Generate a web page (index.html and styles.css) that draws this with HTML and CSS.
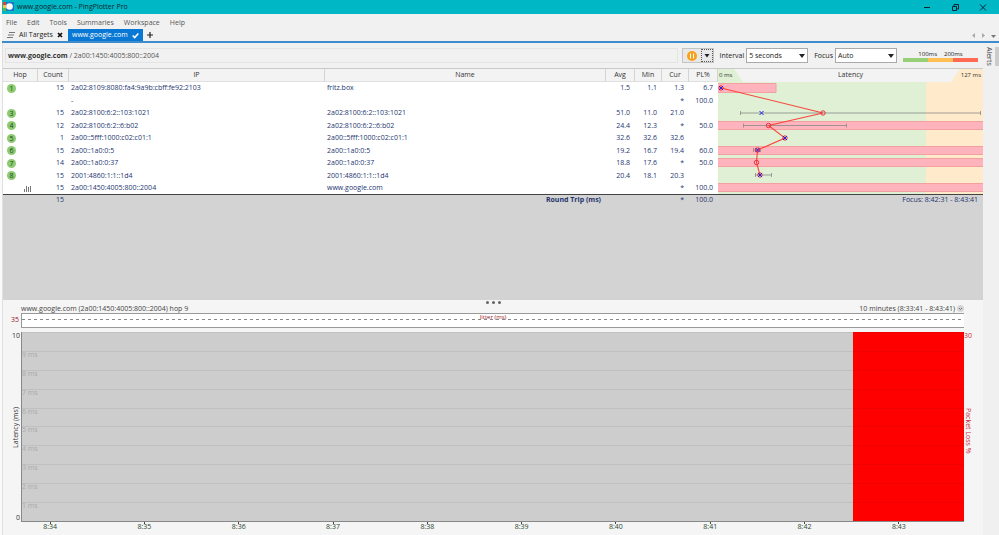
FILE: index.html
```html
<!DOCTYPE html>
<html lang="en">
<head>
<meta charset="utf-8">
<title>www.google.com - PingPlotter Pro</title>
<link rel="stylesheet" href="styles.css">
</head>
<body>
<header class="titlebar">
  <svg class="logo" width="11" height="12" viewBox="0 0 11 12" aria-hidden="true"><path fill="#e84030" d="M0 1h3v3H0z"/><path fill="#f5c63c" d="M0 4h3v3H0z"/><path fill="#58b947" d="M0 7h3v3H0z"/><rect x="3" y="1" width="8" height="9" fill="#1878c8"/><circle cx="6.500" cy="5.500" r="3.300" fill="#fff"/></svg>
  <h1>www.google.com - PingPlotter Pro</h1>
  <div class="window-buttons">
    <button aria-label="Minimize"><svg width="10" height="10" viewBox="0 0 10 10"><path d="M2 5.500h6" stroke="#123" fill="none"/></svg></button>
    <button aria-label="Restore"><svg width="10" height="10" viewBox="0 0 10 10"><path d="M2.500 4.500h4v4h-4zM4 4V2.500h4.500V7H7" stroke="#123" fill="none"/></svg></button>
    <button aria-label="Close"><svg width="10" height="10" viewBox="0 0 10 10"><path d="M2 2.500l6 6M8 2.500l-6 6" stroke="#123" fill="none"/></svg></button>
  </div>
</header>
<nav class="menu">
  <button>File</button><button>Edit</button><button>Tools</button><button>Summaries</button><button>Workspace</button><button>Help</button>
</nav>
<div class="tabs">
  <button class="tab"><svg width="8" height="8" viewBox="0 0 8 8"><path d="M2 1.500h6M1 4h6M0 6.500h6" stroke="#777" fill="none"/></svg>All Targets<svg width="6" height="6" viewBox="0 0 6 6"><path d="M1 1l4 4M5 1l-4 4" stroke="#111" stroke-width="1.700"/></svg></button>
  <button class="tab active">www.google.com<svg width="7" height="7" viewBox="0 0 7 7"><path d="M.7 3.500l2 2L6.300 1.500" stroke="#fff" stroke-width="1.600" fill="none"/></svg></button>
  <button class="tab add" aria-label="Add tab"><svg width="8" height="8" viewBox="0 0 8 8"><path d="M1 4h6M4 1v6" stroke="#222" stroke-width="1.200"/></svg></button>
  <svg class="tab-arrows" width="30" height="8" viewBox="0 0 30 8"><path fill="#aaa" d="M6 1v5L3 3.500zM13 1v5l3-2.500z"/><path fill="#777" d="M22 3h5l-2.500 3z"/></svg>
</div>
<div class="workspace">
  <main>
    <div class="toolbar">
      <div class="target"><b>www.google.com</b> / 2a00:1450:4005:800::2004</div>
      <div class="pause-group">
        <button class="pause" aria-label="Pause"><svg width="12" height="12" viewBox="0 0 12 12"><circle cx="6" cy="6" r="5" fill="#f9a11b"/><path d="M4.500 3.500v5M7.500 3.500v5" stroke="#fff"/></svg></button>
        <button class="more" aria-label="Pause options"><svg width="6" height="4" viewBox="0 0 6 4"><path d="M.5 0h5L3 3.500z" fill="#222"/></svg></button>
      </div>
      <label for="interval">Interval</label>
      <span class="pick"><select id="interval"><option>5 seconds</option></select></span>
      <label for="focus">Focus</label>
      <span class="pick"><select id="focus"><option>Auto</option></select></span>
      <div class="legend">
        <div class="legend-labels"><span>100ms</span><span>200ms</span></div>
        <div class="legend-bar"></div>
      </div>
    </div>
    <section class="trace">
      <table>
        <colgroup><col class="c-hop"><col class="c-count"><col class="c-ip"><col><col class="c-avg"><col class="c-num"><col class="c-num"><col class="c-loss"></colgroup>
        <thead><tr><th>Hop</th><th>Count</th><th>IP</th><th>Name</th><th>Avg</th><th>Min</th><th>Cur</th><th>PL%</th></tr></thead>
        <tbody>
          <tr><td><span class="hop">1</span></td><td>15</td><td>2a02:8109:8080:fa4:9a9b:cbff:fe92:2103</td><td>fritz.box</td><td>1.5</td><td>1.1</td><td>1.3</td><td>6.7</td></tr>
          <tr><td></td><td></td><td>-</td><td></td><td></td><td></td><td>*</td><td>100.0</td></tr>
          <tr><td><span class="hop">3</span></td><td>15</td><td>2a02:8100:6:2::103:1021</td><td>2a02:8100:6:2::103:1021</td><td>51.0</td><td>11.0</td><td>21.0</td><td></td></tr>
          <tr><td><span class="hop">4</span></td><td>12</td><td>2a02:8100:6:2::6:b02</td><td>2a02:8100:6:2::6:b02</td><td>24.4</td><td>12.3</td><td>*</td><td>50.0</td></tr>
          <tr><td><span class="hop">5</span></td><td>1</td><td>2a00::5fff:1000:c02:c01:1</td><td>2a00::5fff:1000:c02:c01:1</td><td>32.6</td><td>32.6</td><td>32.6</td><td></td></tr>
          <tr><td><span class="hop">6</span></td><td>15</td><td>2a00::1a0:0:5</td><td>2a00::1a0:0:5</td><td>19.2</td><td>16.7</td><td>19.4</td><td>60.0</td></tr>
          <tr><td><span class="hop">7</span></td><td>14</td><td>2a00::1a0:0:37</td><td>2a00::1a0:0:37</td><td>18.8</td><td>17.6</td><td>*</td><td>50.0</td></tr>
          <tr><td><span class="hop">8</span></td><td>15</td><td>2001:4860:1:1::1d4</td><td>2001:4860:1:1::1d4</td><td>20.4</td><td>18.1</td><td>20.3</td><td></td></tr>
          <tr><td class="graphed"><svg width="8" height="7" viewBox="0 0 8 7"><path d="M.5 7V4M2.500 7V1M4.500 7V2M6.500 7V1" stroke="#777"/></svg></td><td>15</td><td>2a00:1450:4005:800::2004</td><td>www.google.com</td><td></td><td></td><td>*</td><td>100.0</td></tr>
        </tbody>
        <tfoot><tr><td></td><td>15</td><td></td><td class="round-trip">Round Trip (ms)</td><td></td><td></td><td>*</td><td>100.0</td></tr></tfoot>
      </table>
      <div class="latency">
        <div class="scale"><span class="scale-min">0 ms</span><span>Latency</span><span class="scale-max">127 ms</span></div>
        <svg class="plot" viewBox="0 0 265 112" preserveAspectRatio="none" role="img" aria-label="Latency by hop">
          <path fill="#dff0d4" d="M0 0h208v112H0z"/><path fill="#ffeacb" d="M208 0h57v112h-57z"/>
          <g fill="#ffb3bc" stroke="#f3a0a0">
            <path d="M-1 1.500h59v9H-1zM-1 39.500h267v8H-1zM-1 64.500h267v8H-1zM-1 76.500h267v8H-1zM-1 101.500h267v8H-1z"/>
          </g>
          <path stroke="#888" stroke-opacity=".8" fill="none" d="M22.500 31H262.500M22.500 29v4M262.500 29v4M25.500 43.500H128.500M25.500 41.500v4M128.500 41.500v4M35.500 68H42.500M35.500 66v4M42.500 66v4M37.500 93H53.500M37.500 91v4M53.500 91v4"/>
          <path stroke="#f8453c" stroke-width="1.100" fill="none" d="M3 6L105 31L50.500 43.500L67 56L39.500 68L38.500 80.500L42 93"/>
          <g stroke="#e8303c" fill="none"><circle cx="3" cy="6" r="2.200"/><circle cx="105" cy="31" r="2.200"/><circle cx="50.500" cy="43.500" r="2.200"/><circle cx="67" cy="56" r="2.200"/><circle cx="39.500" cy="68" r="2.200"/><circle cx="38.500" cy="80.500" r="2.200"/><circle cx="42" cy="93" r="2.200"/></g>
          <path stroke="#2222e0" fill="none" d="M1 4l4 4m0-4l-4 4M41.500 29l4 4m0-4l-4 4M65 54l4 4m0-4l-4 4M37.500 66l4 4m0-4l-4 4M40 91l4 4m0-4l-4 4"/>
        </svg>
        <div class="focus-range">Focus: 8:42:31 - 8:43:41</div>
      </div>
    </section>
    <section class="timeline">
      <div class="splitter"><i></i><i></i><i></i></div>
      <div class="timeline-head"><span>www.google.com (2a00:1450:4005:800::2004) hop 9</span><span class="range">10 minutes (8:33:41 - 8:43:41)<svg width="7" height="7" viewBox="0 0 7 7"><circle cx="3.500" cy="3.500" r="3.500" fill="#d4d4d4"/><path d="M2 3l1.500 1.500L5 3" stroke="#777" fill="none"/></svg></span></div>
      <div class="jitter-max">35</div>
      <div class="jitter"><span>Jitter (ms)</span></div>
      <div class="axis-left"><span>10</span><span class="vertical up">Latency (ms)</span><span>0</span></div>
      <div class="chart">
        <div class="loss"></div>
        <div class="lines"><span></span><span>9 ms</span><span>8 ms</span><span>7 ms</span><span>6 ms</span><span>5 ms</span><span>4 ms</span><span>3 ms</span><span>2 ms</span><span>1 ms</span></div>
      </div>
      <div class="axis-right"><span>30</span><span class="vertical">Packet Loss %</span><span></span></div>
      <div class="times"><span>8:34</span><span>8:35</span><span>8:36</span><span>8:37</span><span>8:38</span><span>8:39</span><span>8:40</span><span>8:41</span><span>8:42</span><span>8:43</span></div>
    </section>
  </main>
  <aside><button class="vertical">Alerts</button><div class="scroll"></div></aside>
</div>
</body>
</html>
```
FILE: styles.css
```css
* { box-sizing: border-box; }
body {
  margin: 0;
  height: 100vh;
  display: flex;
  flex-direction: column;
  background: #f1f1f1;
  color: #222;
  font: 7px/12px "Open Sans", "Noto Sans", sans-serif;
  border-left: 2px solid #fafafa;
}
button, select { font: inherit; color: inherit; border: 0; background: none; padding: 0; margin: 0; }
svg { display: block; }

.titlebar { display: flex; align-items: center; height: 14px; padding-left: 1px; background: #00b7c6; flex: none; }
h1 { margin: 0 0 0 3px; font-size: 7px; font-weight: 500; color: #10252b; }
.window-buttons { margin-left: auto; display: flex; gap: 18px; padding-right: 11px; }

.menu { display: flex; gap: 10px; height: 15px; padding: 2px 4px 0; color: #555; flex: none; }

.tabs { display: flex; height: 14px; border-bottom: 2px solid #3f8ccd; flex: none; }
.tab { display: flex; align-items: center; gap: 4px; padding: 0 5px; }
.tab.active { background: #0878d4; color: #fff; padding: 0 4px; }
.tab.add { padding: 0 3px; }
.tab-arrows { margin: 3px 0 0 auto; }

.workspace { flex: 1; display: flex; min-height: 0; }
main { flex: 1; min-width: 0; display: flex; flex-direction: column; border-left: 1px solid #e0e0e0; }

.toolbar { display: flex; align-items: center; height: 26px; padding-right: 5px; border-bottom: 1px solid #c8c8c8; flex: none; }
.target { flex: 1; height: 15px; line-height: 13px; margin: 0 4px 0 2px; padding-left: 2px; border: 1px solid #e4e4e4; color: #555; }
.target b { color: #333; }
.pause-group { display: flex; height: 15px; margin-right: 5px; border: 1px solid #c4c4c4; background: #e8e8e8; }
.pause { width: 18px; display: grid; place-items: center; }
.more { width: 12px; display: grid; place-items: center; border: 1px dotted #555; }
.pick { position: relative; width: 62px; height: 15px; margin: 0 6px 0 2px; }
.pick select { appearance: none; width: 100%; height: 100%; padding: 1px 0 0 2px; background: #fff; border: 1px solid #aaa; }
.pick::after { content: ""; position: absolute; right: 3px; top: 6px; border: 3px solid transparent; border-top: 4px solid #222; border-bottom: 0; }
.legend { width: 75px; line-height: 8px; font-size: 6px; }
.legend-labels { display: flex; justify-content: center; gap: 7px; }
.legend-bar { height: 4px; background: linear-gradient(90deg, #97cf78 33%, #ffbf52 33% 67%, #ff6852 67%); }

.trace { display: flex; height: 231px; background: #d3d3d3; flex: none; }
table { flex: 1; min-width: 0; align-self: flex-start; table-layout: fixed; border-collapse: separate; border-spacing: 0; color: #24356f; }
.c-hop { width: 35px; }
.c-count { width: 31px; }
.c-ip { width: 256px; }
.c-avg, .c-loss { width: 29px; }
.c-num { width: 27px; }
th, td { padding: 0; white-space: nowrap; }
th { height: 13px; font-weight: 400; color: #333; background: #f3f3f3; border-right: 1px solid #d4d4d4; border-bottom: 1px solid #e0e0e0; }
tbody { background: #fff; }
td { height: 12px; line-height: 12px; text-align: right; padding-right: 5px; }
tbody tr:nth-child(even) td { height: 13px; }
td:nth-child(3), td:nth-child(4) { text-align: left; padding-left: 2px; }
td:first-child { text-align: left; padding-left: 4px; }
.hop { display: block; width: 9px; height: 9px; border-radius: 50%; background: #8ccb70; line-height: 9px; text-align: center; color: #24442c; }
td.graphed svg { margin-left: 17px; }
tfoot td { border-top: 1px solid #444; height: 10px; line-height: 9px; }
tfoot td.round-trip { text-align: right; font-weight: 700; }

.latency { width: 265px; flex: none; }
.scale { display: flex; justify-content: space-between; height: 13px; background: #f3f3f3; color: #333; }
.scale-min, .scale-max { width: 32px; font-size: 6px; }
.scale-min { background: #dff0d4; padding-left: 1px; clip-path: polygon(0 0, 16px 0, 25px 100%, 0 100%); }
.scale-max { background: #ffeacb; text-align: right; padding-right: 2px; clip-path: polygon(9px 0, 100% 0, 100% 100%, 0 100%); }
.plot { width: 100%; height: 112px; }
.focus-range { border-top: 1px solid #444; padding-right: 5px; line-height: 9px; text-align: right; color: #24356f; }

.timeline {
  flex: 1;
  display: grid;
  grid-template: 4px 9px 15px 4px 1fr 13px / 18px 1fr 19px;
  background: #f5f5f5;
  color: #444;
}
.splitter { grid-column: 1 / -1; display: flex; justify-content: center; align-items: center; gap: 3px; }
.splitter i { width: 3px; height: 3px; border-radius: 50%; background: #666; }
.timeline-head { grid-area: 2 / 2; display: flex; justify-content: space-between; line-height: 9px; }
.range { display: flex; align-items: center; gap: 2px; }
.jitter-max { grid-area: 3 / 1; line-height: 13px; text-align: right; padding-right: 2px; color: #a01828; }
.jitter { grid-area: 3 / 2; position: relative; background: #fff; border: 1px solid #999; border-right: 0; text-align: center; line-height: 6px; font-size: 6px; color: #a01828; }
.jitter::after { content: ""; position: absolute; left: 0; right: 0; top: 5px; height: 1px; background: repeating-linear-gradient(90deg, #888 0 3px, transparent 3px 6px); }
.axis-left, .axis-right { display: flex; flex-direction: column; justify-content: space-between; line-height: 8px; }
.axis-left { grid-area: 5 / 1; align-items: flex-end; padding-right: 1px; color: #333; }
.axis-right { grid-area: 5 / 3; color: #d02838; align-items: flex-start; }
.vertical { writing-mode: vertical-rl; }
.up { transform: rotate(180deg); }
.chart { grid-area: 5 / 2; position: relative; background: #cdcdcd; border: solid #888; border-width: 0 0 1px 1px; }
.loss { position: absolute; right: 0; top: 0; bottom: 0; width: 11.8%; background: #f00; }
.lines { position: absolute; inset: 0; display: grid; grid-template-rows: repeat(10, 1fr); color: #aaa; line-height: 6px; }
.lines span { border-top: 1px solid rgb(0 0 0 / 6%); }
.times { grid-area: 6 / 2; display: grid; grid-template-columns: repeat(10, 1fr); margin-left: -18px; margin-right: 18px; text-align: center; line-height: 9px; color: #2b4a30; }
.times span { background: linear-gradient(#444, #444) top center / 1px 2px no-repeat; }

aside { width: 16px; display: flex; align-items: flex-start; padding-top: 4px; background: #f0f0f0; }
aside button { width: 12px; line-height: 12px; color: #444; }
.scroll { width: 4px; height: 19px; background: #ccc; }
```
